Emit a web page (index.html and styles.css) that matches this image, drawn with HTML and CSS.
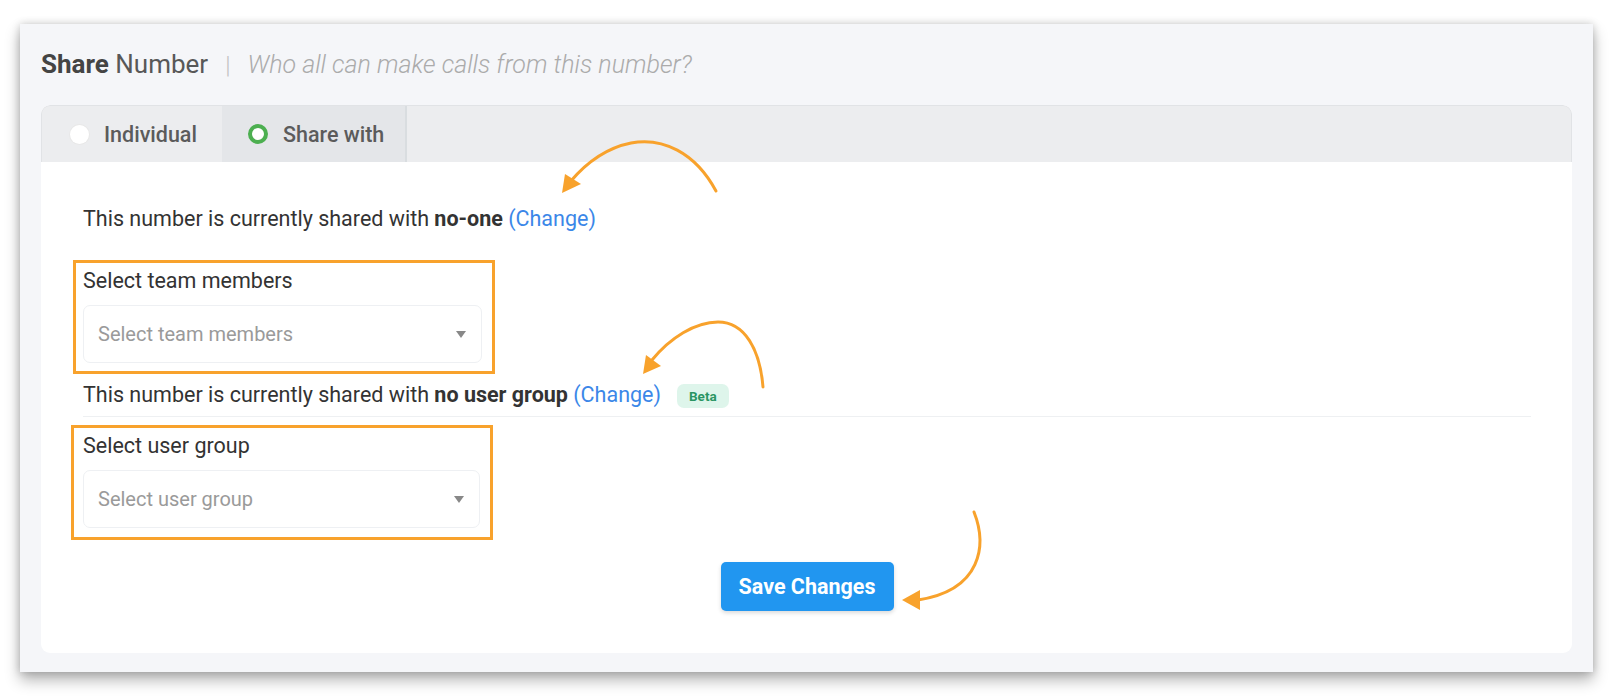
FILE: index.html
```html
<!DOCTYPE html>
<html>
<head>
<meta charset="utf-8">
<link rel="stylesheet" href="styles.css">
</head>
<body>
<div class="panel">
  <h2 class="title"><b>Share</b> Number<span class="sep">|</span><i>Who all can make calls from this number?</i></h2>
  <div class="card">
    <div class="tabs">
      <div class="tab"><span class="radio"></span>Individual</div>
      <div class="tab active"><span class="radio on"></span>Share with</div>
    </div>
    <div class="body">
      <p class="status s1">This number is currently shared with <b>no-one</b> <a class="link">(Change)</a></p>
      <div class="group g1">
        <div class="label">Select team members</div>
        <div class="select"><span class="ph">Select team members</span><span class="caret"></span></div>
      </div>
      <p class="status s2">This number is currently shared with <b>no user group</b> <a class="link">(Change)</a><span class="badge">Beta</span></p>
      <div class="group g2">
        <div class="label">Select user group</div>
        <div class="select"><span class="ph">Select user group</span><span class="caret"></span></div>
      </div>
      <div class="actions"><button class="btn">Save Changes</button></div>
    </div>
  </div>
</div>
<svg class="arrows" width="1616" height="696" viewBox="0 0 1616 696">
  <g fill="none" stroke="#f8a22c" stroke-width="3" stroke-linecap="round">
    <path d="M716,191 C695,152 662,137 631,143 C606,148 586,163 570,182"/>
    <path d="M763,387 C760,350 745,322 718,322 C695,322 670,338 652,360"/>
    <path d="M974,512 C987,545 982,590 918,600"/>
  </g>
  <g fill="#f8a22c">
    <polygon points="562,193 565,174 581,184"/>
    <polygon points="643,374 646,355 661,366"/>
    <polygon points="902,600 920,590 920,610"/>
  </g>
</svg>
</body>
</html>
```
FILE: styles.css
```css
html, body {
  margin: 0;
  padding: 0;
  background: #ffffff;
}
body {
  width: 1616px;
  height: 696px;
  position: relative;
  font-family: Roboto, "Liberation Sans", sans-serif;
  color: #333;
  overflow: hidden;
}
.panel {
  position: relative;
  margin: 24px 0 0 20px;
  width: 1573px;
  height: 648px;
  box-sizing: border-box;
  background: #f5f6f9;
  padding: 24px 21px 20px 21px;
  box-shadow: 0 8px 14px rgba(0,0,0,0.30), 0 0 8px rgba(0,0,0,0.18);
}
.title {
  margin: 0 0 24px 0;
  font-size: 26px;
  line-height: 32px;
  font-weight: 400;
  color: #585858;
  white-space: nowrap;
}
.title b {
  font-weight: 700;
  color: #444444;
}
.title .sep {
  color: #c2c2c2;
  font-weight: 300;
  margin: 0 17px 0 17px;
  font-size: 24px;
}
.title i {
  color: #ababab;
  font-weight: 300;
  font-size: 25px;
}
.card {
  background: #ffffff;
  border-radius: 9px;
  height: 548px;
  overflow: hidden;
}
.tabs {
  display: flex;
  height: 57px;
  box-sizing: border-box;
  background: #ecedef;
  border: 1px solid #e1e3e6;
  border-bottom: none;
  border-radius: 9px 9px 0 0;
}
.tab {
  display: flex;
  align-items: center;
  font-size: 21.5px;
  font-weight: 500;
  color: #5b5b5b;
  padding: 0 25px 0 28px;
  white-space: nowrap;
  box-sizing: border-box;
}
.tab.active {
  background: #e4e6e9;
  border-right: 2px solid #d9dde0;
  padding: 0 21px 0 26px;
}
.radio {
  width: 19px;
  height: 19px;
  border-radius: 50%;
  background: #fff;
  box-shadow: 0 0 0 1px #e8e8e8;
  margin-right: 15px;
  flex: none;
}
.radio.on {
  width: 12px;
  height: 12px;
  border: 4px solid #4caf50;
  box-shadow: none;
}
.body {
  padding: 45px 41px 0 42px;
}
.status {
  margin: 0;
  font-size: 21.5px;
  line-height: 24px;
  color: #333;
  white-space: nowrap;
}
.status b {
  font-weight: 700;
  color: #333;
}
.link {
  color: #3b87e8;
}
.s1 {
  margin-bottom: 29px;
}
.s2 {
  margin-top: 9px;
  padding-bottom: 8px;
  border-bottom: 1px solid #eef0f2;
}
.badge {
  display: inline-block;
  vertical-align: 1px;
  margin-left: 16px;
  background: #def5eb;
  color: #2a9563;
  font-size: 13.5px;
  font-weight: 700;
  line-height: 24px;
  padding: 0 12px;
  border-radius: 7px;
}
.group {
  width: 422px;
  box-sizing: border-box;
  border: 3px solid #f8a22c;
  padding: 6px 10px 8px 7px;
  margin-left: -10px;
}
.g2 {
  margin-top: 8px;
  margin-left: -12px;
  padding-left: 9px;
  height: 115px;
}
.label {
  font-size: 21.5px;
  line-height: 24px;
  color: #333;
  margin-bottom: 12px;
}
.select {
  height: 58px;
  box-sizing: border-box;
  border: 1px solid #eef0f3;
  border-radius: 7px;
  display: flex;
  align-items: center;
  justify-content: space-between;
  padding: 0 15px 0 14px;
}
.ph {
  font-size: 20px;
  color: #9a9a9a;
}
.caret {
  width: 0;
  height: 0;
  border-left: 5px solid transparent;
  border-right: 5px solid transparent;
  border-top: 7px solid #888;
}
.actions {
  display: flex;
  justify-content: center;
  margin-top: 22px;
}
.btn {
  font-family: Roboto, "Liberation Sans", sans-serif;
  background: #2196f0;
  color: #fff;
  border: none;
  border-radius: 5px;
  height: 49px;
  width: 173px;
  padding: 0;
  font-size: 21.5px;
  font-weight: 700;
  box-shadow: 0 2px 4px rgba(0,0,0,0.15);
}
.arrows {
  position: absolute;
  top: 0;
  left: 0;
  pointer-events: none;
}
```
